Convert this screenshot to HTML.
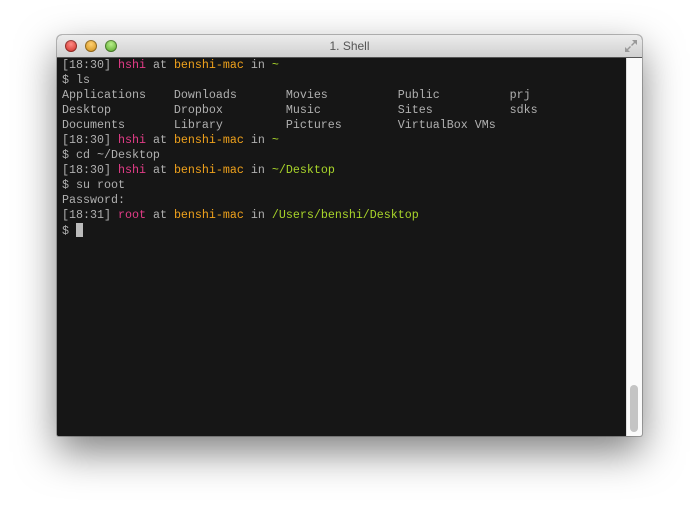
<!DOCTYPE html>
<html><head><style>
body{margin:0;width:699px;height:515px;background:#fff;overflow:hidden;position:relative}
.win{position:absolute;left:57px;top:35px;width:585px;height:401px;border-radius:5px 5px 2px 2px;box-shadow:0 16px 40px rgba(0,0,0,.5),0 0 0 1px rgba(0,0,0,.25);overflow:hidden;background:#161616}
.title{height:22px;background:linear-gradient(#ececec,#d0d0d0);border-bottom:1px solid #555;position:relative;font:12px "Liberation Sans",sans-serif;color:#555;text-align:center;line-height:22px}
.b{position:absolute;top:5px;width:12px;height:12px;border-radius:50%;box-shadow:inset 0 0 0 1px rgba(0,0,0,.35)}
.term{position:absolute;left:0;top:23px;width:570px;bottom:0;background:#161616;font:11.67px "Liberation Mono",monospace;color:#b0b0b0;padding:0 0 0 5px;line-height:15px;white-space:pre}
.sb{position:absolute;right:0;top:23px;width:15px;bottom:0;background:#fafafa;border-left:1px solid #ddd}
.th{position:absolute;left:3px;width:8px;top:327px;height:47px;border-radius:4px;background:#c4c4c4}
.p{color:#e23c87}.o{color:#f0a21c}.g{color:#a8d42a}
.cur{display:inline-block;width:7px;height:14px;background:#bbb;vertical-align:-3px}
</style></head><body>
<div class="win">
<div class="title">
<div class="b" style="left:8px;background:radial-gradient(circle at 50% 35%,#ff8a85,#c8221a)"></div>
<div class="b" style="left:28px;background:radial-gradient(circle at 50% 35%,#ffd070,#c9860d)"></div>
<div class="b" style="left:48px;background:radial-gradient(circle at 50% 35%,#b8ef8a,#4a9d1c)"></div>
1. Shell
<svg style="position:absolute;right:4px;top:4px" width="14" height="14" viewBox="0 0 14 14"><path d="M8 1h5v5l-2-2-3 3-1-1 3-3zM6 13H1V8l2 2 3-3 1 1-3 3z" fill="#999"/></svg>
</div>
<div class="term">[18:30] <span class="p">hshi</span> at <span class="o">benshi-mac</span> in <span class="g">~</span>
$ ls
Applications    Downloads       Movies          Public          prj
Desktop         Dropbox         Music           Sites           sdks
Documents       Library         Pictures        VirtualBox VMs
[18:30] <span class="p">hshi</span> at <span class="o">benshi-mac</span> in <span class="g">~</span>
$ cd ~/Desktop
[18:30] <span class="p">hshi</span> at <span class="o">benshi-mac</span> in <span class="g">~/Desktop</span>
$ su root
Password:
[18:31] <span class="p">root</span> at <span class="o">benshi-mac</span> in <span class="g">/Users/benshi/Desktop</span>
$ <span class="cur"></span></div>
<div class="sb"><div class="th"></div></div>
</div>
</body></html>
